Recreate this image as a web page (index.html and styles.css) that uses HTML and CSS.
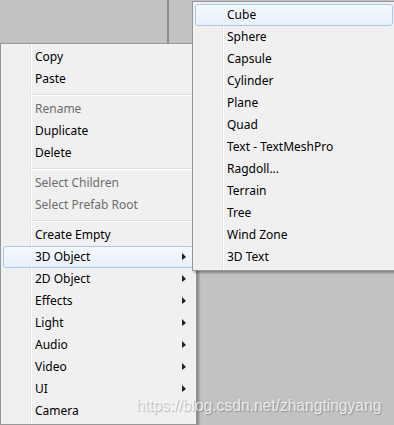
FILE: index.html
```html
<!DOCTYPE html>
<html lang="en">
<head>
    <meta charset="UTF-8">
    <meta name="viewport" content="width=device-width, initial-scale=1.0">
    <title>Hierarchy context menu</title>
    <link rel="stylesheet" href="styles.css">
</head>
<body>
    <div class="workspace">
        <div class="pane"></div>
        <div class="pane"></div>
    </div>

    <ul class="menu menu-main">
        <li class="item">Copy</li>
        <li class="item">Paste</li>
        <li class="sep"></li>
        <li class="item disabled">Rename</li>
        <li class="item">Duplicate</li>
        <li class="item">Delete</li>
        <li class="sep"></li>
        <li class="item disabled">Select Children</li>
        <li class="item disabled">Select Prefab Root</li>
        <li class="sep"></li>
        <li class="item">Create Empty</li>
        <li class="item active">3D Object <span class="arrow"></span></li>
        <li class="item">2D Object <span class="arrow"></span></li>
        <li class="item">Effects <span class="arrow"></span></li>
        <li class="item">Light <span class="arrow"></span></li>
        <li class="item">Audio <span class="arrow"></span></li>
        <li class="item">Video <span class="arrow"></span></li>
        <li class="item">UI <span class="arrow"></span></li>
        <li class="item">Camera</li>
    </ul>

    <ul class="menu menu-sub">
        <li class="item active">Cube</li>
        <li class="item">Sphere</li>
        <li class="item">Capsule</li>
        <li class="item">Cylinder</li>
        <li class="item">Plane</li>
        <li class="item">Quad</li>
        <li class="item">Text - TextMeshPro</li>
        <li class="item">Ragdoll...</li>
        <li class="item">Terrain</li>
        <li class="item">Tree</li>
        <li class="item">Wind Zone</li>
        <li class="item">3D Text</li>
    </ul>

    <div class="watermark">https://blog.csdn.net/zhangtingyang</div>
</body>
</html>
```

FILE: styles.css
```css
* {
    margin: 0;
    padding: 0;
    box-sizing: border-box;
}
body {
    width: 394px;
    height: 425px;
    overflow: hidden;
    position: relative;
    background: #c2c2c2;
    font-family: "Noto Sans", sans-serif;
    font-size: 12px;
    color: #000;
}
.workspace {
    display: flex;
    height: 100%;
}
.pane {
    width: 167px;
}
.pane + .pane {
    flex: 1;
    border-left: 2px solid #8a8a8a;
}
.menu {
    position: absolute;
    list-style: none;
    padding: 2px 0;
    border: 1px solid #979797;
    background: linear-gradient(to right, transparent 29px, #e2e3e3 29px, #e2e3e3 30px, #fff 30px, #fff 31px, transparent 31px), #f0f0f0;
    box-shadow: 2px 2px 2px rgba(0, 0, 0, 0.3);
}
.menu-main {
    left: 0;
    top: 43px;
    width: 197px;
}
.menu-sub {
    left: 192px;
    top: 1px;
    width: 204px;
}
.item {
    display: flex;
    align-items: center;
    height: 22px;
    margin: 0 2px;
    padding: 0 7px 1px 31px;
    border: 1px solid transparent;
    border-radius: 3px;
    white-space: nowrap;
}
.item.disabled {
    color: #6d6d6d;
}
.item.active {
    border-color: #a9c9f0;
    background: linear-gradient(#f5f9fd, #e8f0fb);
}
.arrow {
    margin-left: auto;
    width: 0;
    height: 0;
    border-left: 4px solid #222;
    border-top: 4px solid transparent;
    border-bottom: 3px solid transparent;
}
.sep {
    height: 2px;
    margin: 4px 0 2px 29px;
    border-top: 1px solid #e0e0e0;
    border-bottom: 1px solid #fff;
}
.watermark {
    position: absolute;
    left: 136px;
    top: 397px;
    font-family: "Liberation Sans", Arial, sans-serif;
    font-size: 15.6px;
    color: rgba(255, 255, 255, 0.75);
    text-shadow: 1px 1px 1px rgba(0, 0, 0, 0.25);
    white-space: nowrap;
}
```
